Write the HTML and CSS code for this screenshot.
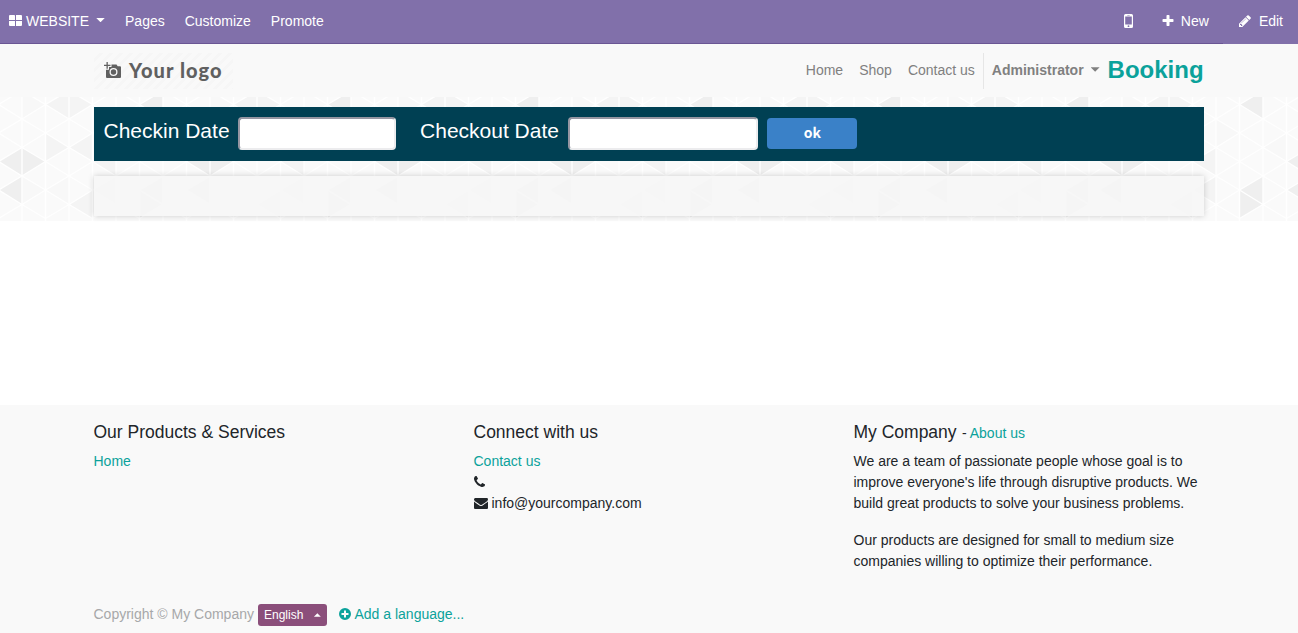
FILE: index.html
```html
<!DOCTYPE html>
<html lang="en">
<head>
<meta charset="utf-8">
<title>Booking | My Company</title>
<link rel="stylesheet" href="styles.css">
</head>
<body>
<nav class="admin">
  <div class="admin-left">
    <a class="brand"><svg class="grid-icon" viewBox="0 0 13 11"><path d="M1 0h4.2q.8 0 .8.8V5H0V1q0-1 1-1zM7 0h5q1 0 1 1v4H7zM0 6h6v5H1q-1 0-1-1zM7 6h6v4q0 1-1 1H7z"/></svg>WEBSITE<i class="caret"></i></a>
    <a>Pages</a><a>Customize</a><a>Promote</a>
  </div>
  <div class="admin-right">
    <a class="mobile"><svg viewBox="0 0 9 14"><path fill-rule="evenodd" d="M1.500 0h6Q9 0 9 1.500v11Q9 14 7.500 14h-6Q0 14 0 12.500v-11Q0 0 1.500 0zM1.200 2.600v7.800h6.600V2.600zM3.300 1v.6h2.400V1zM4.500 11.300a.9.900 0 1 0 0 1.800a.9.900 0 1 0 0-1.800z"/></svg></a>
    <a class="new"><svg class="fa" viewBox="0 0 1792 1792"><path d="M1600 736v192q0 40-28 68t-68 28h-416v416q0 40-28 68t-68 28h-192q-40 0-68-28t-28-68v-416h-416q-40 0-68-28t-28-68v-192q0-40 28-68t68-28h416v-416q0-40 28-68t68-28h192q40 0 68 28t28 68v416h416q40 0 68 28t28 68z"/></svg>New</a>
    <a class="edit"><svg class="fa" viewBox="0 0 1792 1792"><path d="M491 1536l91-91-235-235-91 91v107h128v128h107zm523-928q0-22-22-22-10 0-17 7l-542 542q-7 7-7 17 0 22 22 22 10 0 17-7l542-542q7-7 7-17zm-54-192l416 416-832 832h-416v-416zm683 96q0 53-37 90l-166 166-416-416 166-165q36-38 90-38 53 0 91 38l235 234q37 39 37 91z"/></svg>Edit</a>
  </div>
</nav>
<header class="site">
  <div class="container site-row">
    <div class="logo">
      <svg class="camera" viewBox="0 0 17 17"><path fill-rule="evenodd" d="M2.500 0h1.300v2.700h2.700V4H3.800v2.700H2.500V4H0V2.700h2.500zM7.500 2.500h5l1.200 1.800H16q1 0 1 1V15q0 1-1 1H3q-1 0-1-1V7.800h3V5h2.500zM9.500 6a4 4 0 1 0 0 8a4 4 0 1 0 0-8zM9.500 7.300a2.700 2.700 0 1 1 0 5.400a2.700 2.700 0 1 1 0-5.400z"/></svg>
      <span>Your logo</span>
    </div>
    <div class="menu">
      <a>Home</a><a>Shop</a><a>Contact us</a>
      <a class="user">Administrator<i class="caret"></i></a>
      <a class="booking">Booking</a>
    </div>
  </div>
</header>
<main>
  <section class="hero">
    <svg class="mosaic" width="100%" height="124">
      <defs>
        <g id="lattice" stroke="#fff" stroke-width="1.400" fill="none">
          <path d="M-1.500 0V124M22 0V124M45.500 0V124M69 0V124"/>
          <path d="M-1.500-21L22-6.500L45.500-21L69-6.500L92.500-21M-1.500 7.500L22-6.500L45.500 7.500L69-6.500L92.500 7.500L69 22L45.500 7.500L22 22ZM-1.500 36L22 22L45.500 36L69 22L92.500 36L69 50.500L45.500 36L22 50.500ZM-1.500 64.500L22 50.500L45.500 64.500L69 50.500L92.500 64.500L69 79L45.500 64.500L22 79ZM-1.500 93L22 79L45.500 93L69 79L92.500 93L69 107.500L45.500 93L22 107.500ZM-1.500 121.500L22 107.500L45.500 121.500L69 107.500L92.500 121.500"/>
        </g>
        <g id="motif">
          <path fill="#efefef" d="M-1.500 64.500L22 50.500V79ZM22 50.500L45.500 64.500L22 79ZM-1.500 93L22 79V107.500ZM139.500 7.500L163-6.500V22ZM139.500 93L163 79V107.500ZM139.500 93L163 107.500L139.500 121.500Z"/>
          <path fill="#f4f4f4" d="M45.500 7.500L69-6.500V22ZM69-6.500L92.500 7.500L69 22ZM45.500 36L69 50.500L45.500 64.500ZM69 50.500L92.500 36V64.500ZM69 107.500L92.500 93V121.500ZM92.500 64.500L116 50.500V79ZM92.500 93L116 79V107.500Z"/>
          <path fill="#f8f8f8" d="M22-6.500L45.500 7.500L22 22ZM45.500 93L69 79V107.500ZM116 22L139.500 36L116 50.500ZM22 79L45.500 93L22 107.500ZM163 50.500L186.500 36V64.500Z"/>
          <use href="#lattice"/><use href="#lattice" x="94"/>
        </g>
        <pattern id="tile" width="550" height="124" patternUnits="userSpaceOnUse">
          <rect width="550" height="124" fill="#fafafa"/>
          <use href="#motif"/><use href="#motif" x="188"/><use href="#motif" x="376"/>
        </pattern>
      </defs>
      <rect width="100%" height="124" fill="url(#tile)"/>
    </svg>
    <div class="container hero-body">
      <form class="search">
        <label for="in">Checkin Date</label><input id="in" class="checkin">
        <label for="out" class="out-label">Checkout Date</label><input id="out" class="checkout">
        <button type="button">ok</button>
      </form>
      <div class="results"></div>
    </div>
  </section>
</main>
<footer>
  <div class="container columns">
    <div class="col"><h4>Our Products &amp; Services</h4><p><a>Home</a></p></div>
    <div class="col"><h4>Connect with us</h4>
      <p><a>Contact us</a></p>
      <p><svg class="fa phone" viewBox="192 0 1408 1792"><path d="M1600 1240q0 27-10 70.500t-21 68.500q-21 50-122 106-94 51-186 51-27 0-53-3.500t-57.500-12.500-47-14.500-55.500-20.500-49-18q-98-35-175-83-127-79-264-216t-216-264q-48-77-83-175-3-9-18-49t-20.500-55.500-14.500-47-12.500-57.500-3.500-53q0-92 51-186 56-101 106-122 25-11 68.500-21t70.500-10q14 0 21 3 18 6 53 76 11 19 30 54t35 63.500 31 53.500q3 4 17.500 25t21.500 35.500 7 28.500q0 20-28.500 50t-62 55-62 53-28.500 46q0 9 5 22.500t8.500 20.500 14 24 11.500 19q76 137 174 235t235 174q2 1 19 11.500t24 14 20.500 8.500 22.500 5q18 0 46-28.500t53-62 55-62 50-28.500q14 0 28.500 7t35.500 21.500 25 17.500q25 15 53.500 31t63.500 35 54 30q70 35 76 53 3 7 3 21z"/></svg></p>
      <p><svg class="fa mail" viewBox="0 0 1792 1792"><path d="M1792 710v794q0 66-47 113t-113 47h-1472q-66 0-113-47t-47-113v-794q44 49 101 87 362 246 497 345 57 42 92.500 65.500t94.500 48 110 24.500h2q51 0 110-24.500t94.500-48 92.500-65.500q170-123 498-345 57-39 100-87zm0-294q0 79-49 151t-122 123q-376 261-468 325-10 7-42.500 31t-54 38.500-52 32.500-57.500 27-50 9h-2q-23 0-50-9t-57.500-27-52-32.500-54-38.500-42.500-31q-91-64-262-182.500t-205-142.500q-62-42-117-115.500t-55-136.500q0-78 41.500-130t118.500-52h1472q65 0 112.500 47t47.500 113z"/></svg>info@yourcompany.com</p>
    </div>
    <div class="col"><h4>My Company <small>- <a>About us</a></small></h4>
      <p class="about">We are a team of passionate people whose goal is to improve everyone's life through disruptive products. We build great products to solve your business problems.</p>
      <p>Our products are designed for small to medium size companies willing to optimize their performance.</p>
    </div>
  </div>
  <div class="container legal">
    <span class="copyright">Copyright © My Company</span>
    <span class="lang">English<i class="caret up"></i></span>
    <a class="add"><svg viewBox="0 0 12 12"><path fill-rule="evenodd" d="M6 0a6 6 0 1 0 0 12A6 6 0 1 0 6 0zM5 2.500h2V5h2.500v2H7v2.500H5V7H2.500V5H5z"/></svg>Add a language...</a>
  </div>
</footer>
</body>
</html>
```
FILE: styles.css
```css
* { box-sizing: border-box; }
body { margin: 0; height: 633px; overflow: hidden; display: flex; flex-direction: column; background: #fff; color: #212529; font: 14px/21px "Liberation Sans", Arial, sans-serif; }
svg { fill: currentColor; flex: none; }
a { white-space: nowrap; }
.container { width: 1140px; margin: 0 auto; padding: 0 15px; }
.caret { width: 9px; height: 4.500px; margin: 0 0 2px 7px; background: currentColor; clip-path: polygon(0 0, 100% 0, 50% 100%); }
.caret.up { width: 7px; height: 3.500px; margin: 0 0 0 10.5px; clip-path: polygon(0 100%, 100% 100%, 50% 0); }

.admin { height: 44px; flex: none; display: flex; justify-content: space-between; background: #8170aa; color: #fff; }
.admin-left { flex: 1; display: flex; align-items: center; gap: 20px; padding-left: 9px; border-bottom: 1px solid #6a5694; }
.admin-left a, .admin-right a { display: flex; align-items: center; padding-bottom: 1px; }
.grid-icon { width: 13px; height: 11px; margin: 0 4px 1px 0; }
.fa { width: 14px; height: 14px; }
.admin-right { display: flex; }
.admin-right .mobile, .admin-right .new { border-bottom: 1px solid #6a5694; }
.mobile svg { width: 9px; height: 14px; margin-right: 28px; }
.new svg { margin-right: 6px; }
.admin-right .new { padding-right: 14px; }
.edit { padding: 0 15px; }
.edit svg { margin: 0 7px 1px 0; }

.site { height: 53px; flex: none; background: #f9f9f9; }
.site-row { height: 53px; display: flex; justify-content: space-between; align-items: center; }
.logo { width: 139px; height: 36px; display: flex; align-items: center; padding-left: 10px; color: #606060; background: repeating-linear-gradient(135deg, #f9f9f9 0 4px, #f6f6f6 4px 7px); font: 900 20px/24px Lato, sans-serif; letter-spacing: 1.05px; white-space: nowrap; }
.logo span { padding-bottom: 2px; }
.camera { width: 17px; height: 17px; margin-right: 8px; }
.menu { display: flex; align-items: center; color: #808080; gap: 16px; margin-right: .4px; }
.user { height: 36px; display: flex; align-items: center; border-left: 1px solid #e6e6e6; padding-left: 8px; margin-left: -8px; font-weight: bold; }
.booking { margin-left: -8px; padding-bottom: 2px; color: #0ba29b; font-size: 24px; line-height: 30px; font-weight: bold; }

main { height: 308px; flex: none; }
.hero { position: relative; height: 124px; }
.mosaic { position: absolute; inset: 0; }
.hero-body { position: relative; padding-top: 10px; }
.search { height: 54px; display: flex; align-items: flex-start; background: #004053; padding: 10px 9.5px; color: #fff; }
.search label { font-size: 21px; line-height: 28px; white-space: nowrap; }
.search input { height: 33px; border: 2px solid; border-color: #9696a2 #ececee #ececee #9696a2; border-radius: 4px; background: #fff; margin-left: 8.5px; padding: 0; }
.search .checkin { width: 158px; }
.search .checkout { width: 190px; margin-left: 9.5px; }
.out-label { margin-left: 24px; }
.search button { width: 90px; height: 31px; margin: 1px 0 0 9px; border: 0; border-radius: 4px; background: #3a81c8; color: #fff; font: bold 14px/20px "Noto Sans CJK JP", sans-serif; padding: 0 0 3px; }
.results { height: 40px; margin-top: 15px; background: rgba(246, 246, 246, .88); box-shadow: 0 0 6px rgba(0, 0, 0, .18); }

footer { flex: 1; background: #f9f9f9; }
footer a { color: #0ba29b; }
footer .container { padding-left: 14.5px; }
.columns { display: flex; gap: 30px; padding-top: 17px; height: 198px; }
.col { width: 350px; }
h4 { margin: 0 0 8px; height: 21px; font-size: 17.5px; line-height: 21px; font-weight: normal; }
h4 small { font-size: 14px; margin-left: .5px; }
p { margin: 0; }
.about { margin-bottom: 16px; }
.phone { width: 11px; vertical-align: -2px; }
.mail { margin-right: 4px; vertical-align: -2px; }
.legal { display: flex; align-items: center; height: 22px; color: #a7a8a9; margin-top: 1px; }
.legal > span { white-space: nowrap; }
.copyright { padding-bottom: 2px; }
.lang { display: flex; align-items: center; width: 69px; height: 22px; margin-left: 4px; padding-left: 6px; border-radius: 3px; background: #8b4f7b; color: #fff; font-size: 12px; }
.add { display: flex; align-items: center; margin-left: 12px; padding-bottom: 2px; }
.add svg { width: 12px; height: 12px; margin-right: 3.5px; }
```
